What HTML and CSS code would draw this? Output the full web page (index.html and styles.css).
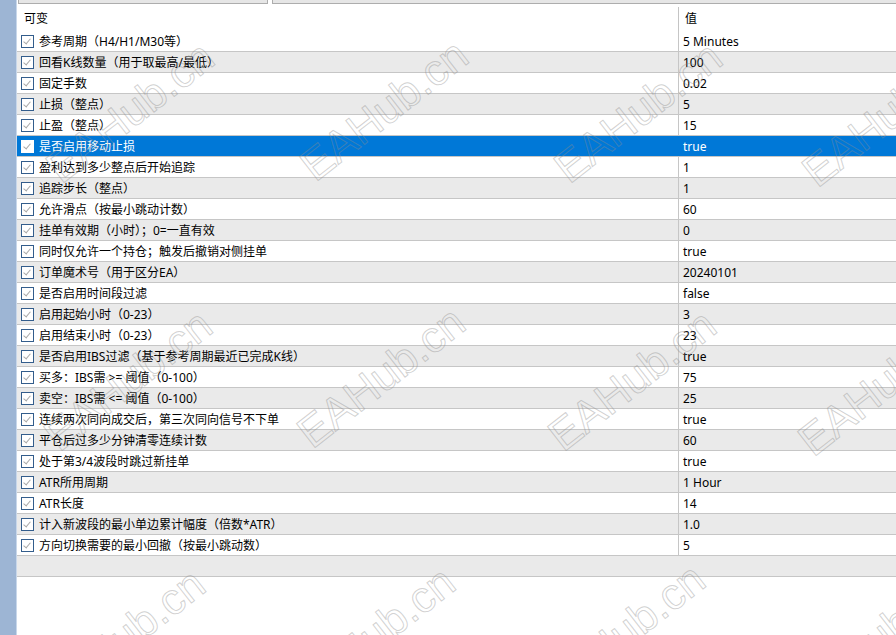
FILE: index.html
```html
<!DOCTYPE html>
<html lang="zh-CN">
<head>
    <meta charset="UTF-8">
    <title>输入参数</title>
    <link rel="stylesheet" href="styles.css">
</head>
<body>
    <div class="sidebar"></div>
    <div class="panel">
        <div class="tabs">
            <div class="tab tab-first"></div>
            <div class="tab tab-rest"></div>
        </div>
        <div class="header">
            <div class="name-col">可变</div>
            <div class="value-col">值</div>
        </div>
        <div class="rows">
            <div class="row"><div class="name-col"><span class="check"></span>参考周期（H4/H1/M30等）</div><div class="value-col">5 Minutes</div></div>
            <div class="row alt"><div class="name-col"><span class="check"></span>回看K线数量（用于取最高/最低）</div><div class="value-col">100</div></div>
            <div class="row"><div class="name-col"><span class="check"></span>固定手数</div><div class="value-col">0.02</div></div>
            <div class="row alt"><div class="name-col"><span class="check"></span>止损（整点）</div><div class="value-col">5</div></div>
            <div class="row"><div class="name-col"><span class="check"></span>止盈（整点）</div><div class="value-col">15</div></div>
            <div class="row selected"><div class="name-col"><span class="check"></span>是否启用移动止损</div><div class="value-col">true</div></div>
            <div class="row"><div class="name-col"><span class="check"></span>盈利达到多少整点后开始追踪</div><div class="value-col">1</div></div>
            <div class="row alt"><div class="name-col"><span class="check"></span>追踪步长（整点）</div><div class="value-col">1</div></div>
            <div class="row"><div class="name-col"><span class="check"></span>允许滑点（按最小跳动计数）</div><div class="value-col">60</div></div>
            <div class="row alt"><div class="name-col"><span class="check"></span>挂单有效期（小时）；0=一直有效</div><div class="value-col">0</div></div>
            <div class="row"><div class="name-col"><span class="check"></span>同时仅允许一个持仓；触发后撤销对侧挂单</div><div class="value-col">true</div></div>
            <div class="row alt"><div class="name-col"><span class="check"></span>订单魔术号（用于区分EA）</div><div class="value-col">20240101</div></div>
            <div class="row"><div class="name-col"><span class="check"></span>是否启用时间段过滤</div><div class="value-col">false</div></div>
            <div class="row alt"><div class="name-col"><span class="check"></span>启用起始小时（0-23）</div><div class="value-col">3</div></div>
            <div class="row"><div class="name-col"><span class="check"></span>启用结束小时（0-23）</div><div class="value-col">23</div></div>
            <div class="row alt"><div class="name-col"><span class="check"></span>是否启用IBS过滤（基于参考周期最近已完成K线）</div><div class="value-col">true</div></div>
            <div class="row"><div class="name-col"><span class="check"></span>买多：IBS需 &gt;= 阈值（0-100）</div><div class="value-col">75</div></div>
            <div class="row alt"><div class="name-col"><span class="check"></span>卖空：IBS需 &lt;= 阈值（0-100）</div><div class="value-col">25</div></div>
            <div class="row"><div class="name-col"><span class="check"></span>连续两次同向成交后，第三次同向信号不下单</div><div class="value-col">true</div></div>
            <div class="row alt"><div class="name-col"><span class="check"></span>平仓后过多少分钟清零连续计数</div><div class="value-col">60</div></div>
            <div class="row"><div class="name-col"><span class="check"></span>处于第3/4波段时跳过新挂单</div><div class="value-col">true</div></div>
            <div class="row alt"><div class="name-col"><span class="check"></span>ATR所用周期</div><div class="value-col">1 Hour</div></div>
            <div class="row"><div class="name-col"><span class="check"></span>ATR长度</div><div class="value-col">14</div></div>
            <div class="row alt"><div class="name-col"><span class="check"></span>计入新波段的最小单边累计幅度（倍数*ATR）</div><div class="value-col">1.0</div></div>
            <div class="row"><div class="name-col"><span class="check"></span>方向切换需要的最小回撤（按最小跳动数）</div><div class="value-col">5</div></div>
            <div class="row alt empty"></div>
        </div>
    </div>

    <!-- watermark overlay -->
    <div class="watermarks">
        <span class="wm" style="left: 130px; top: 112px;">EAHub.cn</span>
        <span class="wm" style="left: 384px; top: 110px;">EAHub.cn</span>
        <span class="wm" style="left: 638px; top: 112px;">EAHub.cn</span>
        <span class="wm" style="left: 886px; top: 116px;">EAHub.cn</span>
        <span class="wm" style="left: 128px; top: 380px;">EAHub.cn</span>
        <span class="wm" style="left: 381px; top: 377px;">EAHub.cn</span>
        <span class="wm" style="left: 632px; top: 380px;">EAHub.cn</span>
        <span class="wm" style="left: 882px; top: 385px;">EAHub.cn</span>
        <span class="wm" style="left: 121px; top: 639px;">EAHub.cn</span>
        <span class="wm" style="left: 371px; top: 637px;">EAHub.cn</span>
        <span class="wm" style="left: 621px; top: 634px;">EAHub.cn</span>
        <span class="wm" style="left: 875px; top: 640px;">EAHub.cn</span>
    </div>
</body>
</html>
```

FILE: styles.css
```css
html, body {
    margin: 0;
    height: 100%;
    overflow: hidden;
}

body {
    display: flex;
    font-family: 'Noto Sans', 'Noto Sans CJK SC', sans-serif;
    font-size: 12px;
    color: #000;
    background: #fff;
    position: relative;
}

.sidebar {
    width: 16px;
    flex-shrink: 0;
    background: #9db5d4;
    border-right: 1px solid #c8d7ea;
}

.panel {
    flex: 1;
    display: flex;
    flex-direction: column;
}

.tabs {
    display: flex;
    gap: 4px;
    height: 4px;
    padding-left: 1px;
}

.tab {
    box-sizing: border-box;
    height: 4px;
    background: #e6e6e6;
    border: 1px solid #adadad;
    border-top: none;
}

.tab-first {
    width: 250px;
}

.tab-rest {
    flex: 1;
    border-right: none;
}

.header {
    display: flex;
    height: 27px;
}

.header .name-col {
    box-sizing: border-box;
    width: 662px;
    padding: 4px 0 0 7px;
    line-height: 22px;
    border-right: 1px solid transparent;
}

.header .value-col {
    margin-top: 3px;
    padding: 1px 0 0 6px;
    line-height: 22px;
    border-left: 1px solid #c4c4c4;
    margin-left: -1px;
}

.row {
    display: flex;
    box-sizing: border-box;
    height: 21px;
    padding-top: 1px;
    border-bottom: 1px solid #c6c6c6;
    line-height: 20px;
    white-space: nowrap;
}

.row.alt {
    background: #eaeaea;
}

.row .name-col {
    box-sizing: border-box;
    width: 662px;
    display: flex;
    align-items: center;
    padding-left: 4px;
    margin-top: -1px;
    padding-top: 1px;
    border-right: 1px solid #c6c6c6;
}

.row .value-col {
    flex: 1;
    padding-left: 4px;
}

.check {
    box-sizing: border-box;
    width: 13px;
    height: 13px;
    margin-right: 5px;
    background: #fff;
    border: 1px solid #335d8c;
    position: relative;
}

.check::after {
    content: '';
    position: absolute;
    left: 3px;
    top: 1px;
    width: 3px;
    height: 6px;
    border-right: 1px solid #a9a9a9;
    border-bottom: 1px solid #a9a9a9;
    transform: rotate(40deg);
}

.row.selected {
    background: #0078d7;
    color: #fff;
}

.row.selected .name-col {
    border-right-color: #0078d7;
}

.row.selected .check {
    border-color: #fff;
}

.watermarks {
    position: absolute;
    inset: 0;
    pointer-events: none;
    overflow: hidden;
}

.wm {
    position: absolute;
    font-family: 'Liberation Sans', sans-serif;
    font-size: 44px;
    line-height: 1;
    white-space: nowrap;
    color: transparent;
    -webkit-text-stroke: 1px rgba(140, 140, 140, 0.4);
    transform: translate(-50%, -50%) rotate(-38deg);
}
```
